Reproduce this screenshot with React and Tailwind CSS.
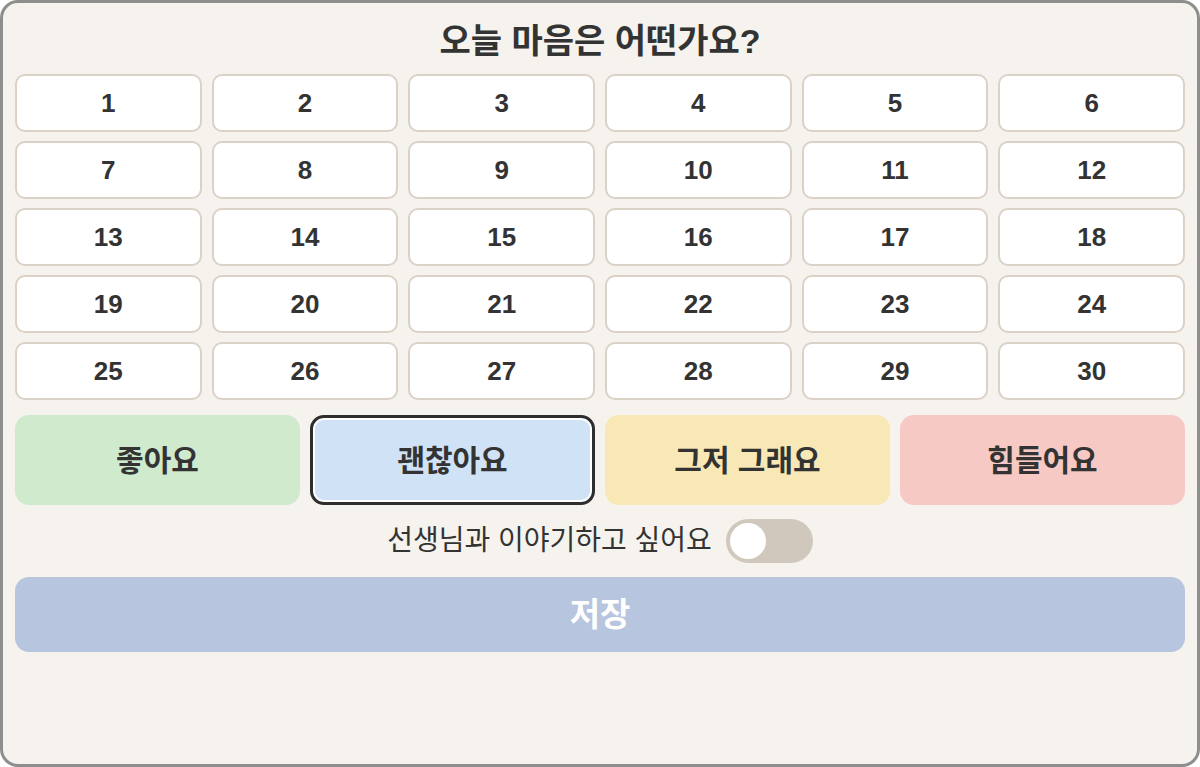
import { useState } from "react";

const MOODS = [
  { label: "좋아요", bg: "bg-[#cfeacd]" },
  { label: "괜찮아요", bg: "bg-[#d0e2f6]" },
  { label: "그저 그래요", bg: "bg-[#f8e8b5]" },
  { label: "힘들어요", bg: "bg-[#f6c9c4]" },
];

const App = () => {
  const [day, setDay] = useState(null);
  const [mood, setMood] = useState(1);
  const [talk, setTalk] = useState(false);

  const days = Array.from({ length: 30 }, (_, i) => i + 1);

  return (
    <div
      className="w-[1200px] h-[767px] bg-white"
      style={{ fontFamily: '"Liberation Sans", "Noto Sans CJK KR", sans-serif' }}
    >
      <div className="w-full h-full border-[3px] border-[#8e8e8e] rounded-[18px] bg-[#f6f3ee] px-[12px] pt-[13px] flex flex-col text-[#333]">
        {/* Title */}
        <h1 className="h-[58px] flex items-start justify-center text-[34px] font-semibold leading-[50px]">
          오늘 마음은 어떤가요?
        </h1>

        {/* Day grid */}
        <div className="grid grid-cols-6 gap-x-[10px] gap-y-[9px]">
          {days.map((d) => (
            <button
              key={d}
              onClick={() => setDay(d)}
              className={
                "h-[58px] rounded-[10px] border-2 bg-white text-[26px] font-bold text-[#333] flex items-center justify-center " +
                (day === d ? "border-[#333]" : "border-[#dad1c7]")
              }
            >
              {d}
            </button>
          ))}
        </div>

        {/* Mood buttons */}
        <div className="grid grid-cols-4 gap-[10px] mt-[15px]">
          {MOODS.map((m, i) => (
            <button
              key={m.label}
              onClick={() => setMood(i)}
              className={
                "h-[90px] rounded-[14px] text-[30px] font-semibold text-[#333] flex items-center justify-center " +
                m.bg +
                (mood === i ? " border-[3px] border-[#2e2e2e] ring-2 ring-inset ring-white" : "")
              }
            >
              {m.label}
            </button>
          ))}
        </div>

        {/* Talk toggle */}
        <div className="flex items-center justify-center gap-[14px] mt-[14px] h-[44px]">
          <span className="text-[28px] text-[#333]">선생님과 이야기하고 싶어요</span>
          <button
            onClick={() => setTalk(!talk)}
            className={
              "w-[87px] h-[44px] rounded-full p-[4px] flex items-center " +
              (talk ? "bg-[#8fb0d8] justify-end" : "bg-[#d0c8bd] justify-start")
            }
          >
            <span className="w-[36px] h-[36px] rounded-full bg-white block" />
          </button>
        </div>

        {/* Save */}
        <button className="mt-[14px] h-[75px] rounded-[14px] bg-[#b7c6de] text-white text-[33px] font-bold flex items-center justify-center">
          저장
        </button>
      </div>
    </div>
  );
};

export default App;
